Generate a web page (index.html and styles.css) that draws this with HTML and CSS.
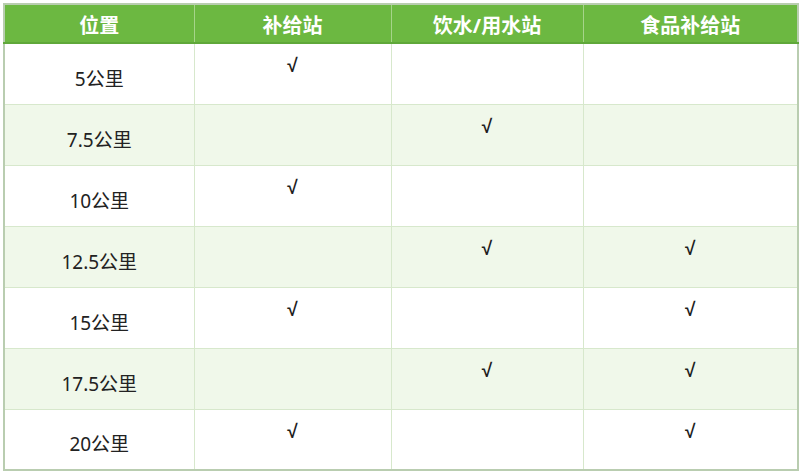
FILE: index.html
```html
<!DOCTYPE html>
<html lang="zh">
<head>
<meta charset="utf-8">
<link rel="stylesheet" href="styles.css">
</head>
<body>
<table class="stations">
  <colgroup>
    <col class="c1"><col class="c2"><col class="c3"><col class="c4">
  </colgroup>
  <thead>
    <tr><th>位置</th><th>补给站</th><th>饮水/用水站</th><th>食品补给站</th></tr>
  </thead>
  <tbody>
    <tr><td class="pos">5公里</td><td class="mark">√</td><td class="mark"></td><td class="mark"></td></tr>
    <tr class="alt"><td class="pos">7.5公里</td><td class="mark"></td><td class="mark">√</td><td class="mark"></td></tr>
    <tr><td class="pos">10公里</td><td class="mark">√</td><td class="mark"></td><td class="mark"></td></tr>
    <tr class="alt"><td class="pos">12.5公里</td><td class="mark"></td><td class="mark">√</td><td class="mark">√</td></tr>
    <tr><td class="pos">15公里</td><td class="mark">√</td><td class="mark"></td><td class="mark">√</td></tr>
    <tr class="alt"><td class="pos">17.5公里</td><td class="mark"></td><td class="mark">√</td><td class="mark">√</td></tr>
    <tr><td class="pos">20公里</td><td class="mark">√</td><td class="mark"></td><td class="mark">√</td></tr>
  </tbody>
</table>
</body>
</html>
```
FILE: styles.css
```css
html, body {
  margin: 0;
  padding: 0;
  background: #ffffff;
}
body {
  padding: 3px 0 0 3px;
  font-family: "Noto Sans", "Noto Sans CJK SC", sans-serif;
  color: #222;
}
.stations {
  border-collapse: collapse;
  table-layout: fixed;
  width: 794px;
  border: 2px solid #b9cdb0;
}
.c1 { width: 190px; }
.c2 { width: 197px; }
.c3 { width: 192px; }
.c4 { width: 215px; }
.stations thead th {
  background: #6cb841;
  color: #fff;
  font-weight: 700;
  font-size: 20px;
  height: 39px;
  padding: 5px 0 0 0;
  line-height: 30px;
  box-sizing: border-box;
  border-left: 1px solid #a6d48a;
  border-bottom: 2px solid #5fa83a;
}
.stations thead th:first-child { border-left: none; }
.stations td {
  height: 61px;
  padding: 0;
  border: 1px solid #d7e8cc;
  text-align: center;
  box-sizing: border-box;
}
.stations tr.alt td { background: #f0f8ea; }
.stations td.pos {
  font-size: 19px;
  vertical-align: middle;
  padding-top: 10px;
  line-height: 24px;
}
.stations td.mark {
  vertical-align: top;
  padding-top: 11px;
  font-size: 19px;
  font-weight: 700;
  line-height: 22px;
  color: #1e1e1e;
  font-family: "Liberation Sans", "DejaVu Sans", sans-serif;
}
```
